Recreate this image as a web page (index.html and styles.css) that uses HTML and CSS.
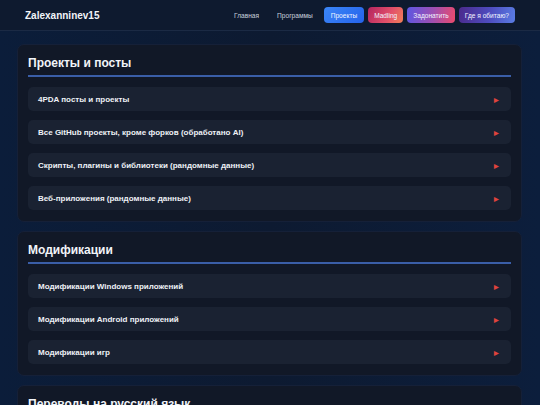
FILE: index.html
```html
<!DOCTYPE html>
<html lang="ru">
<head>
<meta charset="utf-8">
<link rel="stylesheet" href="styles.css">
</head>
<body>
<header class="topbar">
  <div class="logo">Zalexanninev15</div>
  <nav class="nav">
    <a class="nav-link">Главная</a>
    <a class="nav-link">Программы</a>
    <a class="btn btn-blue">Проекты</a>
    <a class="btn btn-madling">Madling</a>
    <a class="btn btn-donate">Задонатить</a>
    <a class="btn btn-where">Где я обитаю?</a>
  </nav>
</header>
<main class="content">
  <section class="card">
    <h2 class="card-title">Проекты и посты</h2>
    <div class="list">
      <div class="item"><span>4PDA посты и проекты</span><span class="arrow">▶</span></div>
      <div class="item"><span>Все GitHub проекты, кроме форков (обработано AI)</span><span class="arrow">▶</span></div>
      <div class="item"><span>Скрипты, плагины и библиотеки (рандомные данные)</span><span class="arrow">▶</span></div>
      <div class="item"><span>Веб-приложения (рандомные данные)</span><span class="arrow">▶</span></div>
    </div>
  </section>
  <section class="card">
    <h2 class="card-title">Модификации</h2>
    <div class="list">
      <div class="item"><span>Модификации Windows приложений</span><span class="arrow">▶</span></div>
      <div class="item"><span>Модификации Android приложений</span><span class="arrow">▶</span></div>
      <div class="item"><span>Модификации игр</span><span class="arrow">▶</span></div>
    </div>
  </section>
  <section class="card">
    <h2 class="card-title">Переводы на русский язык</h2>
    <div class="list">
      <div class="item"><span>Переводы программ</span><span class="arrow">▶</span></div>
    </div>
  </section>
</main>
</body>
</html>
```
FILE: styles.css
```css
* { box-sizing: border-box; }
html, body { margin: 0; padding: 0; }
body {
  font-family: "Liberation Sans", Arial, sans-serif;
  color: #e8ecf3;
  background: linear-gradient(90deg, #0b1d3a 0%, #0d1a31 50%, #0c1e3c 100%);
  min-height: 405px;
}
.topbar {
  height: 31px;
  display: flex;
  align-items: center;
  justify-content: space-between;
  padding: 0 25px;
  background: #0e1a2f;
  border-bottom: 1px solid #1b2a44;
}
.logo {
  font-size: 10px;
  font-weight: 700;
  color: #f1f4f9;
}
.nav {
  display: flex;
  align-items: center;
  gap: 4px;
}
.nav-link {
  font-size: 6.6px;
  color: #c9d1de;
  padding: 0 7px;
}
.btn {
  height: 16px;
  display: flex;
  align-items: center;
  padding: 0 6px;
  border-radius: 4px;
  font-size: 6.6px;
  color: #f2f4ff;
}
.btn-blue { background: linear-gradient(135deg, #3b86f7, #2563eb); padding: 0 7px; }
.btn-madling { background: linear-gradient(120deg, #b3245f, #e2506a 60%, #f08058); }
.btn-donate { background: linear-gradient(100deg, #5b57e3, #a04fb0 55%, #ec4a6c); }
.btn-where { background: linear-gradient(100deg, #4a2a8c, #4e4cbf 55%, #5a7de4); }
.content {
  padding: 13px 18px 0 17px;
  display: flex;
  flex-direction: column;
  gap: 9px;
}
.card {
  background: #111827;
  border: 1px solid #152038;
  border-radius: 7px;
  padding: 10px 10px 11px 10px;
}
.card-title {
  margin: 0;
  font-size: 12px;
  font-weight: 700;
  line-height: 17px;
  color: #f1f4f9;
  padding-bottom: 3px;
  border-bottom: 2px solid #3a5ea8;
}
.list {
  margin-top: 10px;
  display: flex;
  flex-direction: column;
  gap: 9px;
}
.item {
  height: 24px;
  display: flex;
  align-items: center;
  justify-content: space-between;
  padding: 0 12px 0 10px;
  background: #1a2232;
  border-radius: 5px;
  font-size: 8px;
  font-weight: 700;
  color: #eef1f6;
}
.arrow {
  color: #e0433d;
  font-size: 6px;
}
```
